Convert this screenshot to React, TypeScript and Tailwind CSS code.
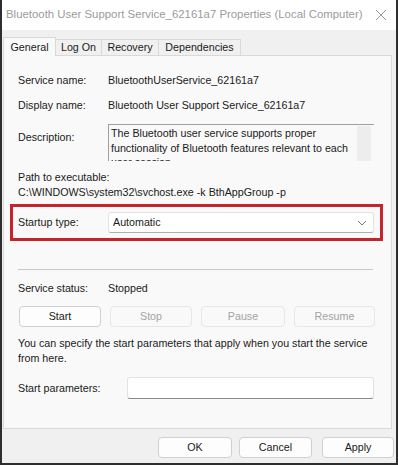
import React from "react";

const font = { fontFamily: '"Liberation Sans", Arial, sans-serif' };

function Btn({ label, disabled, className }: { label: string; disabled?: boolean; className: string }) {
  return (
    <div
      className={
        "flex items-center justify-center rounded-[4px] border text-[10.7px] " +
        (disabled
          ? "border-[#e6e6e6] bg-[#f9f9f9] text-[#a3a3a3] "
          : "border-[#d0d0d0] bg-[#fdfdfd] text-[#1a1a1a] ") +
        className
      }
    >
      {label}
    </div>
  );
}

export default function App() {
  return (
    <div
      className="w-[398px] h-[465px] bg-[#f0f0f0] border-l-2 border-r-2 border-b-2 border-[#2e2e2e] flex flex-col text-[#1a1a1a] overflow-hidden"
      style={font}
    >
      {/* title bar */}
      <div className="h-[30px] shrink-0 bg-white flex items-center pl-[4px] pr-[6px] justify-between">
        <span className="text-[11.4px] text-[#9b9b9b] whitespace-nowrap">
          Bluetooth User Support Service_62161a7 Properties (Local Computer)
        </span>
        <svg width="12" height="12" viewBox="0 0 12 12" className="mr-[3px]">
          <path d="M1 1 L11 11 M11 1 L1 11" stroke="#9b9b9b" strokeWidth="1" fill="none" />
        </svg>
      </div>
      {/* tabs */}
      <div className="h-[25px] shrink-0 flex items-end pl-[1px] text-[10.7px]">
        <div className="h-[19px] w-[53px] bg-[#f9f9f9] border border-b-0 border-[#d9d9d9] flex items-center justify-center relative top-[1px] z-10">
          General
        </div>
        <div className="h-[16px] w-[46px] bg-[#f0f0f0] border border-b-0 border-l-0 border-[#d9d9d9] flex items-center justify-center">
          Log On
        </div>
        <div className="h-[16px] w-[57px] bg-[#f0f0f0] border border-b-0 border-l-0 border-[#d9d9d9] flex items-center justify-center">
          Recovery
        </div>
        <div className="h-[16px] w-[82px] bg-[#f0f0f0] border border-b-0 border-l-0 border-[#d9d9d9] flex items-center justify-center">
          Dependencies
        </div>
      </div>
      {/* panel */}
      <div className="h-[374px] shrink-0 ml-[1px] mr-[4px] bg-[#f9f9f9] border border-[#d9d9d9] text-[10.7px] flex flex-col">
        <div className="flex items-center h-[14px] mt-[17px]">
          <span className="w-[104px] pl-[14px]">Service name:</span>
          <span>BluetoothUserService_62161a7</span>
        </div>
        <div className="flex items-center h-[14px] mt-[11px]">
          <span className="w-[104px] pl-[14px]">Display name:</span>
          <span>Bluetooth User Support Service_62161a7</span>
        </div>
        <div className="flex mt-[12px]">
          <span className="w-[104px] pl-[14px] pt-[5px]">Description:</span>
          <div className="w-[266px] h-[37px] overflow-hidden border-t border-l border-[#a0a0a0] bg-[#f9f9f9] flex">
            <div className="flex-1 pl-[2px] leading-[14.5px] pt-[1px]">
              The Bluetooth user service supports proper functionality of Bluetooth features relevant to each user session.
            </div>
            <div className="w-[14px] bg-[#ededed] mr-[3px] mt-[1px]" />
          </div>
        </div>
        <div className="pl-[14px] mt-[9px] leading-[15px]">
          <div>Path to executable:</div>
          <div>C:\WINDOWS\system32\svchost.exe -k BthAppGroup -p</div>
        </div>
        {/* red box */}
        <div className="mt-[4px] ml-[6px] w-[373px] h-[37px] border-[3px] border-[#c4242b] flex items-center">
          <span className="w-[95px] pl-[5px]">Startup type:</span>
          <div className="w-[266px] h-[21px] bg-white border border-[#e3e3e3] border-b-[#b0b0b0] rounded-[3px] flex items-center justify-between pl-[4px] pr-[6px]">
            <span>Automatic</span>
            <svg width="10" height="6" viewBox="0 0 10 6">
              <path d="M1 1 L5 5 L9 1" stroke="#7a7a7a" strokeWidth="1" fill="none" />
            </svg>
          </div>
        </div>
        <div className="ml-[14px] mr-[18px] mt-[28px] h-px bg-[#c8c8c8]" />
        <div className="flex items-center h-[14px] mt-[11px]">
          <span className="w-[104px] pl-[14px]">Service status:</span>
          <span>Stopped</span>
        </div>
        <div className="flex mt-[11px] pl-[15px] gap-[9px] h-[21px]">
          <Btn label="Start" className="w-[82px]" />
          <Btn label="Stop" disabled className="w-[82px]" />
          <Btn label="Pause" disabled className="w-[84px]" />
          <Btn label="Resume" disabled className="w-[81px]" />
        </div>
        <div className="pl-[14px] pr-[8px] mt-[9px] leading-[15px]">
          You can specify the start parameters that apply when you start the service from here.
        </div>
        <div className="flex items-center mt-[11px]">
          <span className="w-[123px] pl-[14px]">Start parameters:</span>
          <div className="w-[247px] h-[22px] bg-white border border-[#e3e3e3] border-b-[#8a8a8a] rounded-[3px]" />
        </div>
      </div>
      {/* footer */}
      <div className="flex-1 flex items-start justify-end gap-[7px] pr-[2px] pt-[8px]">
        <Btn label="OK" className="w-[74px] h-[21px]" />
        <Btn label="Cancel" className="w-[73px] h-[21px] mr-[3px]" />
        <Btn label="Apply" className="w-[72px] h-[21px]" />
      </div>
    </div>
  );
}
